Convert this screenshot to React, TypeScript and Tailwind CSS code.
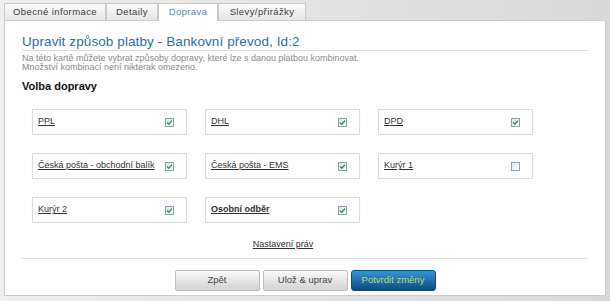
import React from "react";

const Check = ({ on }: { on: boolean }) => (
  <span className="flex h-[9px] w-[9px] items-center justify-center border border-[#8aa0b4] bg-gradient-to-br from-[#dfe6ec] to-[#ffffff]">
    {on && (
      <svg width="7" height="7" viewBox="0 0 7 7">
        <path d="M1 3.6 L2.8 5.3 L6 1.6" stroke="#2e9a2e" strokeWidth="1.4" fill="none" />
      </svg>
    )}
  </span>
);

const Box = ({ label, on, bold }: { label: string; on: boolean; bold?: boolean }) => (
  <div className="flex h-[26px] items-center justify-between border border-[#dcdcdc] bg-white pl-[5px] pr-[12px] shadow-[0_0_1px_#eee]">
    <span className={"text-[9px] text-[#333] underline " + (bold ? "font-bold text-[#111]" : "")}>{label}</span>
    <Check on={on} />
  </div>
);

const tabs = [
  { t: "Obecné informace", w: "w-[102px]" },
  { t: "Detaily", w: "w-[52px]" },
  { t: "Doprava", w: "w-[60px]", active: true },
  { t: "Slevy/přirážky", w: "w-[88px]" },
];

export default function App() {
  return (
    <div className="flex h-[301px] w-[610px] flex-col bg-gradient-to-r from-[#eeeeee] to-[#d8d8d8] font-['Liberation_Sans',Arial,sans-serif]">
      <div className="flex h-[20px] items-end pl-[4px]">
        {tabs.map((tab) => (
          <div
            key={tab.t}
            className={
              tab.w +
              " flex h-[17px] items-center justify-center border border-b-0 border-[#c9c9c9] text-[9.5px] tracking-[0.4px] " +
              (tab.active
                ? "relative z-10 -mb-px h-[18px] bg-white text-[#4a86ba]"
                : "bg-gradient-to-b from-[#fbfbfb] to-[#e6e6e6] text-[#3a3a3a]")
            }
          >
            {tab.t}
          </div>
        ))}
      </div>
      <div className="mx-[4px] flex h-[276px] w-[602px] flex-col border border-[#cccccc] bg-white px-[17px]">
        <div className="w-[566px] border-b border-[#dedede] pt-[12px] text-[13.5px] leading-[17px] tracking-[0.1px] text-[#2f6ea6]">
          Upravit způsob platby - Bankovní převod, Id:2
        </div>
        <div className="mt-[3px] text-[9px] leading-[9px] text-[#8a8a8a]">
          <div>Na této kartě můžete vybrat způsoby dopravy, které lze s danou platbou kombinovat.</div>
          <div>Množství kombinací není nikterak omezeno.</div>
        </div>
        <div className="mt-[7px] text-[11px] font-bold leading-[14px] text-[#111]">Volba dopravy</div>
        <div className="ml-[10px] mt-[16px] grid w-[502px] grid-cols-[155px_155px_155px] gap-x-[18px] gap-y-[18px]">
          <Box label="PPL" on />
          <Box label="DHL" on />
          <Box label="DPD" on />
          <Box label="Česká pošta - obchodní balík" on />
          <Box label="Česká pošta - EMS" on />
          <Box label="Kurýr 1" on={false} />
          <Box label="Kurýr 2" on />
          <Box label="Osobní odběr" on bold />
        </div>
        <div className="ml-[10px] mt-[15px] w-[502px] text-center text-[9px] leading-[12px] text-[#333] underline">
          Nastavení práv
        </div>
        <div className="mt-[8px] w-[566px] border-b border-[#e0e0e0]" />
        <div className="mt-[11px] flex w-[566px] justify-center gap-[3px]">
          <button className="flex h-[21px] w-[85px] items-center justify-center rounded-[2px] border border-[#bdbdbd] bg-gradient-to-b from-[#fafafa] to-[#d2d2d2] text-[9.5px] text-[#444]">
            Zpět
          </button>
          <button className="flex h-[21px] w-[85px] items-center justify-center rounded-[2px] border border-[#bdbdbd] bg-gradient-to-b from-[#fafafa] to-[#d2d2d2] text-[9.5px] text-[#444]">
            Ulož &amp; uprav
          </button>
          <button className="flex h-[21px] w-[85px] items-center justify-center rounded-[3px] border border-[#0d4a7c] bg-gradient-to-b from-[#3596d3] to-[#0b4d83] text-[9.5px] text-[#b9dc6a]">
            Potvrdit změny
          </button>
        </div>
      </div>
    </div>
  );
}
